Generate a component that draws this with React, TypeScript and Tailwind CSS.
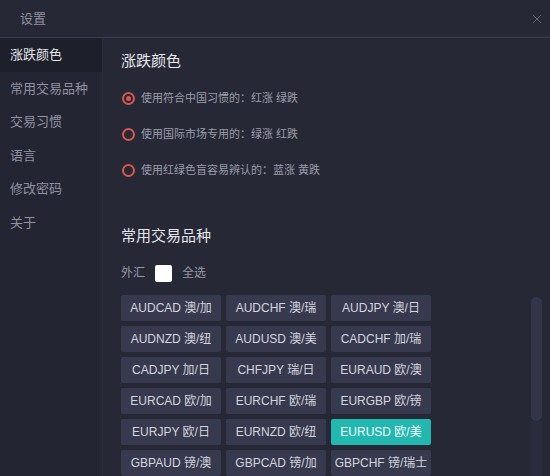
import { X } from "lucide-react";

const menu = ["涨跌颜色", "常用交易品种", "交易习惯", "语言", "修改密码", "关于"];

const radios = [
  { label: "使用符合中国习惯的：红涨 绿跌", on: true },
  { label: "使用国际市场专用的：绿涨 红跌", on: false },
  { label: "使用红绿色盲容易辨认的：蓝涨 黄跌", on: false },
];

const pairs = [
  "AUDCAD 澳/加", "AUDCHF 澳/瑞", "AUDJPY 澳/日",
  "AUDNZD 澳/纽", "AUDUSD 澳/美", "CADCHF 加/瑞",
  "CADJPY 加/日", "CHFJPY 瑞/日", "EURAUD 欧/澳",
  "EURCAD 欧/加", "EURCHF 欧/瑞", "EURGBP 欧/镑",
  "EURJPY 欧/日", "EURNZD 欧/纽", "EURUSD 欧/美",
  "GBPAUD 镑/澳", "GBPCAD 镑/加", "GBPCHF 镑/瑞士",
];

export default function App() {
  return (
    <main
      className="w-[550px] h-[476px] overflow-hidden bg-[#262836] flex flex-col"
      style={{ fontFamily: '"Liberation Sans", "Noto Sans CJK SC", sans-serif' }}
    >
      {/* Header */}
      <header className="h-[38px] shrink-0 flex items-center justify-between pl-[20px] pr-[6px] border-b border-[#3a3d4e]">
        <span className="text-[13px] text-[#8f92a0]">设置</span>
        <X size={14} strokeWidth={1.5} className="text-[#6d7080]" />
      </header>

      <div className="flex flex-1 min-h-0">
        {/* Sidebar */}
        <nav className="w-[103px] shrink-0 bg-[#232533] border-r border-[#2b2d3c] flex flex-col">
          {menu.map((m, i) => (
            <div
              key={m}
              className={
                "h-[33.5px] flex items-center pl-[10px] text-[13px] " +
                (i === 0 ? "bg-[#1d1f2a] text-[#e4e5ea]" : "text-[#9092a0]")
              }
            >
              {m}
            </div>
          ))}
        </nav>

        {/* Content */}
        <section className="flex-1 flex min-w-0">
          <div className="flex-1 pl-[18px] pt-[12px]">
            <h2 className="text-[15px] text-[#e6e7ec] leading-[22px]">涨跌颜色</h2>

            <div className="mt-[17px] flex flex-col gap-[17px]">
              {radios.map((r) => (
                <label key={r.label} className="flex items-center gap-[6px] h-[19px] leading-[19px]">
                  <span className="w-[13px] h-[13px] ml-[1px] rounded-full border-2 border-[#d9574c] flex items-center justify-center">
                    {r.on && <span className="w-[5px] h-[5px] rounded-full bg-[#d9574c]" />}
                  </span>
                  <span className="text-[11px] text-[#9b9daa]">{r.label}</span>
                </label>
              ))}
            </div>

            <h2 className="mt-[45px] text-[15px] text-[#e6e7ec] leading-[22px]">常用交易品种</h2>

            <div className="mt-[17px] flex items-center h-[18px] text-[12px] text-[#9698a6]">
              <span>外汇</span>
              <span className="ml-[10px] w-[17px] h-[17px] rounded-[2px] bg-white" />
              <span className="ml-[10px]">全选</span>
            </div>

            <div className="mt-[13px] grid grid-cols-[100px_100px_100px] gap-x-[5px] gap-y-[5px]">
              {pairs.map((p) => (
                <button
                  key={p}
                  className={
                    "h-[26px] rounded-[2px] text-[12px] " +
                    (p === "EURUSD 欧/美"
                      ? "bg-[#22b8b0] text-[#f2fbfa]"
                      : "bg-[#373a4e] text-[#d3d5de]")
                  }
                >
                  {p}
                </button>
              ))}
            </div>
          </div>

          {/* Scrollbar */}
          <div className="w-[27px] shrink-0 flex flex-col pt-[259px] items-center">
            <div className="w-[11px] h-[124px] rounded-full bg-[#33364a]" />
            <div className="w-[11px] flex-1 bg-[#2a2c3b]" />
          </div>
        </section>
      </div>
    </main>
  );
}
